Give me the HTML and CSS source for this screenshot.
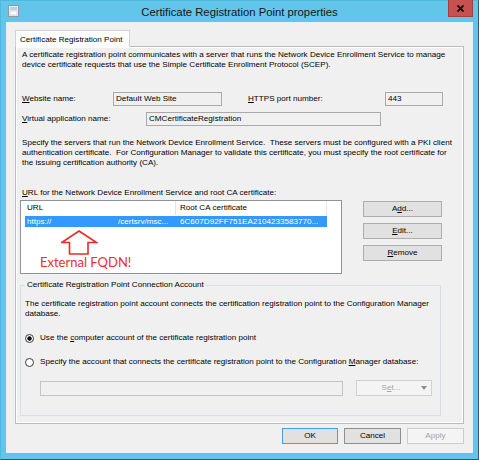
FILE: index.html
```html
<!DOCTYPE html>
<html>
<head>
<meta charset="utf-8">
<title>Certificate Registration Point properties</title>
<link rel="stylesheet" href="styles.css">
</head>
<body>
<div class="window">
  <div class="titlebar">
    <div class="tb-left">
      <svg class="app-icon" width="11" height="12" viewBox="0 0 11 12">
        <rect x="0.5" y="0.5" width="10" height="11" fill="#e9eef2" stroke="#8d9aa5"/>
        <rect x="2" y="2" width="7" height="3" fill="#b9d3e6"/>
        <rect x="2" y="6" width="7" height="4" fill="#f7f9fa" stroke="#c3ccd3" stroke-width="0.6"/>
      </svg>
    </div>
    <div class="title">Certificate Registration Point properties</div>
    <div class="tb-right">
      <div class="close">
        <svg width="7" height="7" viewBox="0 0 7 7"><path d="M1 1 L6 6 M6 1 L1 6" stroke="#1c1212" stroke-width="1.8" stroke-linecap="square"/></svg>
      </div>
    </div>
  </div>

  <div class="client">
    <div class="tabstrip">
      <div class="tab">Certificate Registration Point</div>
    </div>

    <div class="panel">
      <p class="text intro">A certificate registration point communicates with a server that runs the Network Device Enrollment Service to manage<br>device certificate requests that use the Simple Certificate Enrollment Protocol (SCEP).</p>

      <div class="row row-site">
        <span class="label label-site"><u>W</u>ebsite name:</span>
        <span class="field field-site">Default Web Site</span>
        <span class="label label-port"><u>H</u>TTPS port number:</span>
        <span class="field field-port">443</span>
      </div>

      <div class="row row-vapp">
        <span class="label label-vapp"><u>V</u>irtual application name:</span>
        <span class="field field-vapp">CMCertificateRegistration</span>
      </div>

      <p class="text servers">Specify the servers that run the Network Device Enrollment Service.&nbsp; These servers must be configured with a PKI client<br>authentication certificate.&nbsp; For Configuration Manager to validate this certificate, you must specify the root certificate for<br>the issuing certification authority (CA).</p>

      <div class="text url-label"><u>U</u>RL for the Network Device Enrollment Service and root CA certificate:</div>

      <div class="list-row">
        <div class="listbox">
          <div class="lv-header">
            <span class="col col-url">URL</span>
            <span class="col col-ca">Root CA certificate</span>
          </div>
          <div class="lv-item selected">
            <span class="cell cell-url"><span class="scheme">https://</span><span class="path">/certsrv/msc...</span></span>
            <span class="cell cell-ca">6C607D92FF751EA2104233583770...</span>
          </div>
          <svg class="annot-arrow" width="37" height="25" viewBox="0 0 37 25">
            <path d="M18 1 L35.5 12.5 L27 12.5 L27 24 L8.5 24 L8.5 12.5 L0.8 12.5 Z" fill="none" stroke="#ec2a2a" stroke-width="1.6" stroke-linejoin="miter"/>
          </svg>
          <div class="annot-text">External FQDN!</div>
        </div>
        <div class="list-buttons">
          <button class="btn">A<u>d</u>d...</button>
          <button class="btn"><u>E</u>dit...</button>
          <button class="btn"><u>R</u>emove</button>
        </div>
      </div>

      <fieldset class="group">
        <legend>Certificate Registration Point Connection Account</legend>
        <p class="text group-text">The certificate registration point account connects the certification registration point to the Configuration Manager<br>database.</p>
        <div class="radio-row first">
          <span class="radio checked"></span>
          <span>Use the <u>c</u>omputer account of the certificate registration point</span>
        </div>
        <div class="radio-row">
          <span class="radio"></span>
          <span>Specify the account that connects the certificate registration point to the Configuration <u>M</u>anager database:</span>
        </div>
        <div class="account-row">
          <span class="field account-field"></span>
          <span class="dropbtn"><span class="drop-label">S<u>e</u>t...</span><span class="drop-arrow"></span></span>
        </div>
      </fieldset>
    </div>

    <div class="footer">
      <button class="btn default">OK</button>
      <button class="btn cancel">Cancel</button>
      <button class="btn disabled"><u>A</u>pply</button>
    </div>
  </div>
</div>
</body>
</html>
```

FILE: styles.css
```css
* { box-sizing: border-box; }

html, body {
  margin: 0;
  padding: 0;
}

body {
  width: 479px;
  height: 460px;
  overflow: hidden;
  background: #ffffff;
  font-family: "Liberation Sans", Arial, sans-serif;
  font-size: 8.1px;
  line-height: 10px;
  color: #000;
}

.window {
  width: 479px;
  height: 460px;
  background: #61c6ea;
  border: 1px solid #4fb8df;
  border-right-color: #2c5c72;
  border-bottom-color: #2c5c72;
  display: flex;
  flex-direction: column;
}

/* ---------- title bar ---------- */
.titlebar {
  height: 21px;
  flex: none;
  display: grid;
  grid-template-columns: 1fr auto 1fr;
  align-items: start;
}

.tb-left {
  padding: 4px 0 0 7px;
}

.app-icon { display: block; }

.title {
  font-size: 11.3px;
  line-height: 22px;
  color: #151515;
  white-space: nowrap;
}

.tb-right {
  display: flex;
  justify-content: flex-end;
}

.close {
  width: 25px;
  height: 17px;
  margin-top: -1px;
  margin-right: 5px;
  background: #c75050;
  border: 1px solid #a23f3f;
  border-top: none;
  display: flex;
  align-items: center;
  justify-content: center;
}

.close svg { display: block; }

/* ---------- client ---------- */
.client {
  flex: 1;
  margin: 0 5px 6px 5px;
  background: #f0f0f0;
  border: 1px solid #e6f2f8;
  padding: 7px 8px 8px 8px;
  display: flex;
  flex-direction: column;
}

.tabstrip {
  display: flex;
  height: 16px;
  flex: none;
}

.tab {
  height: 17px;
  position: relative;
  z-index: 1;
  background: #ffffff;
  border: 1px solid #d3d3d3;
  border-bottom: none;
  padding: 2px 6px 0 4px;
  line-height: 13px;
  white-space: nowrap;
}

.panel {
  height: 378px;
  flex: none;
  border: 1px solid #bcbcbc;
  box-shadow: inset 0 0 0 1px #ffffff;
  background: #f0f0f0;
  padding: 3px 0 0 4px;
}

.text {
  margin: 0;
  padding-left: 2px;
  line-height: 10px;
  white-space: nowrap;
}

/* ---------- label/field rows ---------- */
.row {
  display: flex;
  align-items: center;
  height: 14px;
  padding-left: 2px;
}

.row-site { margin-top: 22px; }
.row-vapp { margin-top: 6px; }

.label { white-space: nowrap; }
.label-site { width: 91px; }
.label-port { width: 137px; margin-left: 26px; }
.label-vapp { width: 124px; }

.field {
  height: 14px;
  border: 1px solid #a9a9a9;
  background: #f0f0f0;
  padding-left: 2px;
  line-height: 12px;
  white-space: nowrap;
}

.field-site { width: 109px; }
.field-port { width: 58px; }
.field-vapp { width: 235px; }

.servers { margin-top: 12px; }
.url-label { margin-top: 20px; }

/* ---------- list view ---------- */
.list-row {
  display: flex;
  align-items: flex-start;
  margin-top: 2px;
}

.listbox {
  position: relative;
  width: 322px;
  height: 74px;
  border: 1px solid #8e9399;
  background: #ffffff;
}

.lv-header {
  display: flex;
  height: 14px;
  line-height: 14px;
}

.col {
  white-space: nowrap;
  border-right: 1px solid #e3e3e3;
}

.col-url { width: 155px; padding-left: 6px; }
.col-ca { width: 151px; padding-left: 4px; }

.lv-item {
  display: flex;
  width: 302px;
  height: 11px;
  margin: 1px 0 0 4px;
  line-height: 11px;
  white-space: nowrap;
}

.lv-item.selected {
  background: #3399ff;
  color: #ffffff;
}

.cell-url {
  width: 151px;
  padding-left: 2px;
  display: flex;
}

.scheme {
  width: 91px;
  flex: none;
}

.cell-ca { padding-left: 4px; }

.annot-arrow {
  position: absolute;
  left: 40px;
  top: 29px;
}

.annot-text {
  position: absolute;
  left: 19px;
  top: 53px;
  font-family: Lato, "Open Sans", sans-serif;
  font-size: 13px;
  line-height: 16px;
  color: #e8302f;
  white-space: nowrap;
}

.list-buttons {
  display: flex;
  flex-direction: column;
  gap: 6px;
  margin-left: 21px;
  margin-top: 1px;
}

/* ---------- buttons ---------- */
.btn {
  width: 79px;
  height: 16px;
  padding: 0;
  margin: 0;
  font: inherit;
  line-height: 14px;
  color: #000;
  background: #e1e1e1;
  border: 1px solid #adadad;
  text-align: center;
}

/* ---------- group box ---------- */
.group {
  margin: 6px 0 0 0;
  width: 421px;
  min-width: 0;
  border: 1px solid #d5dfe5;
  padding: 0 0 19px 4px;
}

.group legend {
  padding: 0 2px;
  line-height: 10px;
  white-space: nowrap;
}

.group-text {
  margin-top: 9px;
  padding-left: 0;
}

.radio-row {
  display: flex;
  align-items: center;
  height: 10px;
  margin-top: 14px;
  white-space: nowrap;
}

.radio {
  width: 9px;
  height: 9px;
  flex: none;
  margin-right: 6px;
  border-radius: 50%;
  border: 1px solid #3c3c3c;
  background: #ffffff;
}

.radio.checked {
  background: radial-gradient(circle, #111 0, #111 1.9px, #ffffff 2.5px);
}

.account-row {
  display: flex;
  align-items: center;
  height: 16px;
  margin-top: 13px;
}

.account-field {
  width: 303px;
  height: 15px;
  margin-left: 15px;
  border-color: #c4c4c4;
}

.dropbtn {
  width: 76px;
  height: 16px;
  margin-left: 13px;
  display: flex;
  align-items: center;
  background: #f4f4f4;
  border: 1px solid #d0d0d0;
  color: #a6a6a6;
}

.drop-label {
  flex: 1;
  text-align: center;
  padding-left: 4px;
}

.drop-arrow {
  width: 0;
  height: 0;
  margin-right: 4px;
  border-left: 3.5px solid transparent;
  border-right: 3.5px solid transparent;
  border-top: 4px solid #8c8c8c;
}

/* ---------- footer ---------- */
.footer {
  display: flex;
  justify-content: flex-end;
  gap: 6px;
  margin-top: 4px;
}

.footer .btn { width: 57px; }
.footer .btn.default { width: 56px; border-color: #4f9be0; }
.footer .btn.cancel { border-color: #8f8f8f; }
.footer .btn.disabled {
  background: #f4f4f4;
  border-color: #cdcdcd;
  color: #a3a3a3;
}
.footer .btn.disabled u { text-decoration: none; }
```
